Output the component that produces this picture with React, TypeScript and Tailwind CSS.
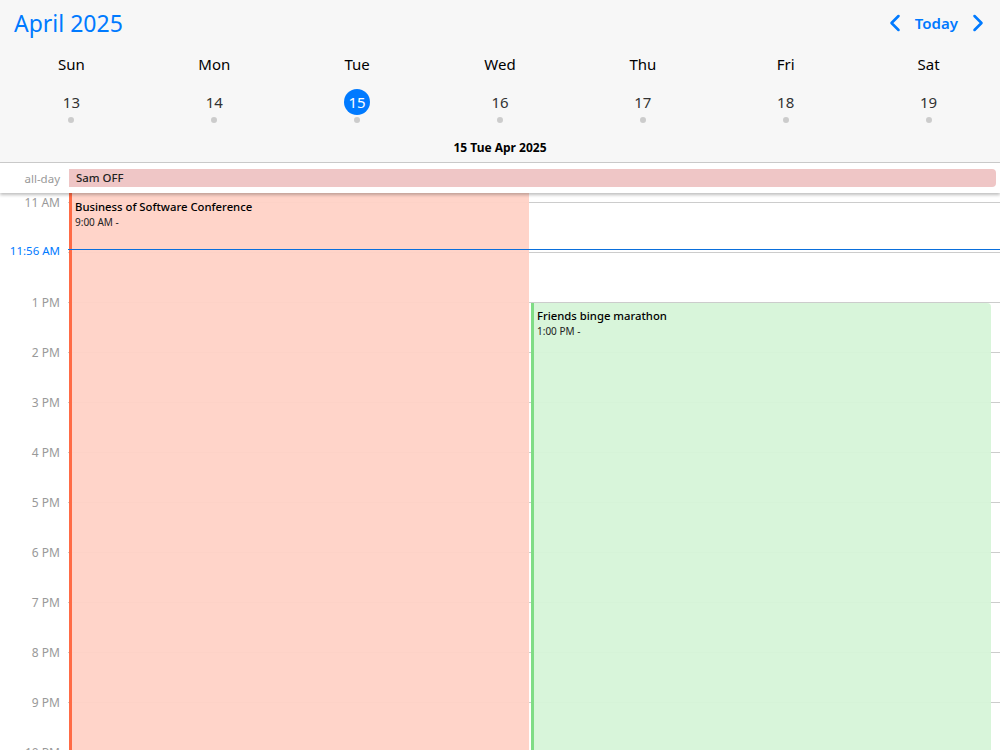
import { ChevronLeft, ChevronRight } from "lucide-react";

const days = [
  { name: "Sun", date: 13 },
  { name: "Mon", date: 14 },
  { name: "Tue", date: 15, today: true },
  { name: "Wed", date: 16 },
  { name: "Thu", date: 17 },
  { name: "Fri", date: 18 },
  { name: "Sat", date: 19 },
];

const hours = ["12 PM", "1 PM", "2 PM", "3 PM", "4 PM", "5 PM", "6 PM", "7 PM", "8 PM", "9 PM", "10 PM"];

function HourRow({ label }: { label: string }) {
  return (
    <div className="flex h-[50px] items-start">
      <div className="w-[60px] shrink-0 -translate-y-[7px] text-right text-xs leading-4 text-[#999]">
        {label === "12 PM" ? "" : label}
      </div>
      <div className="ml-[8px] h-px flex-1 bg-[#ccc]" />
    </div>
  );
}

export default function App() {
  return (
    <div className="flex h-[750px] w-[1000px] flex-col overflow-hidden bg-white font-['Noto_Sans',sans-serif] text-black">
      <header className="h-[163px] shrink-0 border-b border-[#ccc] bg-[#f7f7f7]">
        <div className="flex h-[48px] items-center justify-between pl-[14px] pr-[8px]">
          <h1 className="-translate-y-px text-[23px] text-[#007aff]">April 2025</h1>
          <div className="flex items-center text-[#007aff]">
            <ChevronLeft className="h-7 w-7 -translate-y-px" strokeWidth={2.2} />
            <span className="mr-[6px] ml-[6px] -translate-y-px text-[15px] font-semibold">Today</span>
            <ChevronRight className="h-7 w-7 -translate-y-px" strokeWidth={2.2} />
          </div>
        </div>
        <div className="grid grid-cols-7">
          {days.map((d) => (
            <div key={d.name} className="flex flex-col items-center">
              <div className="mt-[4px] h-[24px] text-[15px] leading-6">{d.name}</div>
              <div
                className={
                  d.today
                    ? "mt-[13px] flex h-[26px] w-[26px] items-center justify-center rounded-full bg-[#007aff] text-[15px] text-white"
                    : "mt-[13px] flex h-[26px] w-[26px] items-center justify-center text-[15px] text-[#333]"
                }
              >
                {d.date}
              </div>
              <div className="mt-[2px] h-[6px] w-[6px] rounded-full bg-[#ccc]" />
            </div>
          ))}
        </div>
        <div className="mt-[17px] text-center text-xs leading-4 font-bold">15 Tue Apr 2025</div>
      </header>

      <div className="relative z-10 flex h-[30px] shrink-0 items-center bg-white shadow-[0_2px_3px_rgba(0,0,0,0.25)]">
        <div className="w-[60px] shrink-0 translate-y-px text-right text-[11.5px] text-[#999]">all-day</div>
        <div className="ml-[9px] flex h-[18px] w-[927px] items-center rounded-r-[4px] bg-[#efc6c6] pl-[7px] text-[11.4px] font-medium text-[#222]">
          Sam OFF
        </div>
      </div>

      <div className="relative flex-1 overflow-hidden pt-[9px]">
        <div className="flex h-[50px] items-start">
          <div className="w-[60px] shrink-0 -translate-y-[7px] text-right text-xs leading-4 text-[#999]">11 AM</div>
          <div className="ml-[8px] h-px flex-1 bg-[#ccc]" />
        </div>
        {hours.map((h) => (
          <HourRow key={h} label={h} />
        ))}

        {/* events sit over the hour lines */}
        <div className="absolute top-0 bottom-0 left-[69px] w-[460px] border-l-[3px] border-[#ff6b45] bg-[#ffd2c6]/95 pt-[6px] pl-[3px]">
          <div className="text-[11.3px] leading-4 font-medium">Business of Software Conference</div>
          <div className="text-[10px] leading-[14px] text-[#222]">9:00 AM -</div>
        </div>
        <div className="absolute top-[110px] bottom-0 left-[531px] w-[460px] rounded-tr-[4px] border-l-[3px] border-[#7fdc85] bg-[#d6f4d8]/95 pt-[5px] pl-[3px]">
          <div className="text-[11.3px] leading-4 font-medium">Friends binge marathon</div>
          <div className="text-[10px] leading-[14px] text-[#222]">1:00 PM -</div>
        </div>

        {/* current time */}
        <div className="absolute top-[56px] left-0 flex h-px w-full items-center">
          <div className="w-[60px] shrink-0 translate-y-px text-right text-[11.5px] leading-4 whitespace-nowrap text-[#007aff]">11:56 AM</div>
          <div className="ml-[8px] h-px flex-1 bg-[#0a6fdc]" />
        </div>
      </div>
    </div>
  );
}
